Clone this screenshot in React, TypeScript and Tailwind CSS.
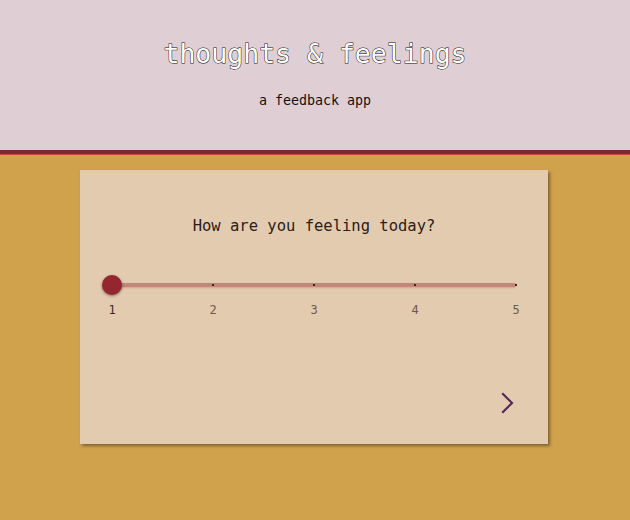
import { useState } from "react";

const steps = [1, 2, 3, 4, 5];

export default function App() {
  const [value, setValue] = useState(1);
  const pct = ((value - 1) / (steps.length - 1)) * 100;

  return (
    <div className="min-h-[520px] w-full bg-[#d1a24c] font-['DejaVu_Sans_Mono',monospace]">
      <header className="flex h-[154px] flex-col items-center border-b-4 border-[#7b2832] bg-[#e0ced5] shadow-[0_1px_0_#c4474c]">
        <h1 className="mt-[37px] text-[26.5px] leading-[34px] text-white [-webkit-text-stroke:1px_#111] [paint-order:stroke_fill]">
          thoughts &amp; feelings
        </h1>
        <p className="mt-[21px] text-[13.3px] leading-[18px] text-[#111]">a feedback app</p>
      </header>

      <main className="ml-[80px] mt-[16px] h-[274px] w-[468px] bg-[#e3cbb0] shadow-[2px_2px_3px_rgba(0,0,0,0.4)]">
        <div className="flex flex-col px-[32px]">
          <h2 className="mt-[45px] text-center text-[15.5px] leading-[22px] text-[#2b2018]">
            How are you feeling today?
          </h2>

          <div className="relative mt-[46px] h-[4px] rounded-full bg-[#bf8878] shadow-[0_1px_2px_rgba(230,120,120,0.6)]">
            {steps.slice(1).map((s) => (
              <span
                key={s}
                className="absolute top-[1px] h-[2px] w-[2px] -translate-x-1/2 bg-[#3a2a22]"
                style={{ left: `${((s - 1) / (steps.length - 1)) * 100}%` }}
              />
            ))}
            <button
              onClick={() => setValue(value === 5 ? 1 : value + 1)}
              className="absolute top-1/2 h-[20px] w-[20px] -translate-x-1/2 -translate-y-1/2 rounded-full bg-[#93262e] shadow-[0_1px_3px_rgba(0,0,0,0.45)]"
              style={{ left: `${pct}%` }}
            />
          </div>

          <div className="relative mt-[15px] h-[16px]">
            {steps.map((s) => (
              <span
                key={s}
                className={`absolute -translate-x-1/2 text-[12px] leading-[16px] ${s === value ? "text-[#3b2a20]" : "text-[#6e5848]"}`}
                style={{ left: `${((s - 1) / (steps.length - 1)) * 100}%` }}
              >
                {s}
              </span>
            ))}
          </div>

          <div className="mt-[74px] flex justify-end pr-[2px]">
            <button className="text-[#562a57]">
              <svg width="14" height="22" viewBox="0 0 14 22" fill="none">
                <path d="M3 2 L12 11 L3 20" stroke="currentColor" strokeWidth="2.2" strokeLinecap="square" />
              </svg>
            </button>
          </div>
        </div>
      </main>
    </div>
  );
}
